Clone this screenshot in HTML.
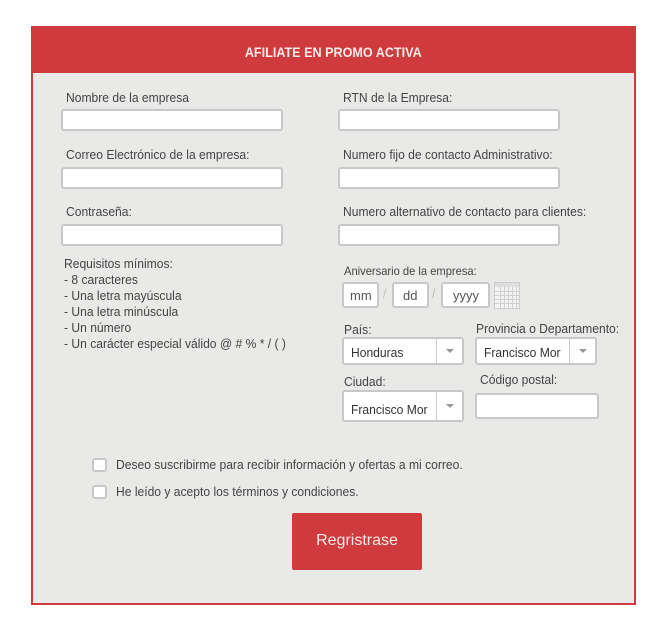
<!DOCTYPE html>
<html><head><meta charset="utf-8"><style>
*{box-sizing:border-box;margin:0;padding:0}
body{width:659px;height:624px;background:#fff;position:relative;font-family:"Liberation Sans",sans-serif;color:#444;font-size:13px}
.a{position:absolute}
#box{left:31px;top:26px;width:605px;height:579px;border:2px solid #cf3b3c;border-top:none;background:#e9e9e8}
#hd{left:31px;top:26px;width:605px;height:47px;background:#cf3b3c;color:#fbeaea;font-size:14px;font-weight:bold;text-align:center;line-height:52px}
#hd span{display:inline-block;transform:scaleX(0.9)}
.in{position:absolute;background:#fff;border:2px solid #c8c8c8;border-radius:3px;height:22px}
.l{position:absolute;white-space:nowrap;font-size:13px;color:#444;transform:scaleX(0.93);transform-origin:0 0}
.sel{position:absolute;background:#fff;border:2px solid #c8c8c8;border-radius:3px}
.sel span{position:absolute;left:7px;bottom:3px;font-size:13px;color:#333;white-space:nowrap;transform:scaleX(0.93);transform-origin:0 0}
.sel i{position:absolute;right:0;top:0;bottom:0;width:26px;border-left:1px solid #ccc;background:#fff}
.sel i:after{content:"";position:absolute;left:9px;top:50%;margin-top:-2px;border-left:4px solid transparent;border-right:4px solid transparent;border-top:4px solid #999}
.cb{position:absolute;width:15px;height:14px;border:2px solid #c8c8c8;border-radius:3px;background:#fff}
</style></head><body>
<div id="box" class="a"></div>
<div id="hd" class="a"><span>AFILIATE EN PROMO ACTIVA</span></div>

<div class="l" style="left:66px;top:90px">Nombre de la empresa</div>
<div class="in" style="left:61px;top:109px;width:222px"></div>
<div class="l" style="left:66px;top:147px">Correo Electrónico de la empresa:</div>
<div class="in" style="left:61px;top:167px;width:222px"></div>
<div class="l" style="left:66px;top:204px">Contraseña:</div>
<div class="in" style="left:61px;top:224px;width:222px"></div>

<div class="l" style="left:343px;top:90px">RTN de la Empresa:</div>
<div class="in" style="left:338px;top:109px;width:222px"></div>
<div class="l" style="left:343px;top:147px">Numero fijo de contacto Administrativo:</div>
<div class="in" style="left:338px;top:167px;width:222px"></div>
<div class="l" style="left:343px;top:204px">Numero alternativo de contacto para clientes:</div>
<div class="in" style="left:338px;top:224px;width:222px"></div>

<div class="l" style="left:64px;top:256px;line-height:16px">Requisitos mínimos:<br>- 8 caracteres<br>- Una letra mayúscula<br>- Una letra minúscula<br>- Un número<br>- Un carácter especial válido @ # % * / ( )</div>

<div class="l" style="left:344px;top:264px;font-size:12px">Aniversario de la empresa:</div>
<div class="in" style="left:342px;top:282px;width:37px;height:26px;font-size:13px;color:#555;padding:4px 0 0 6px">mm</div>
<div class="l" style="left:383px;top:286px;color:#bbb">/</div>
<div class="in" style="left:392px;top:282px;width:37px;height:26px;font-size:13px;color:#555;padding:4px 0 0 9px">dd</div>
<div class="l" style="left:432px;top:286px;color:#bbb">/</div>
<div class="in" style="left:441px;top:282px;width:49px;height:26px;font-size:13px;color:#555;padding:4px 0 0 10px">yyyy</div>
<svg class="a" style="left:494px;top:282px" width="26" height="27" viewBox="0 0 26 27"><rect x="0.5" y="0.5" width="25" height="26" fill="#f3f3f3" stroke="#ccc"/><rect x="1" y="1" width="24" height="4" fill="#ddd"/><g stroke="#d0d0d0" stroke-width="1"><line x1="1" y1="9.5" x2="25" y2="9.5"/><line x1="1" y1="13.5" x2="25" y2="13.5"/><line x1="1" y1="17.5" x2="25" y2="17.5"/><line x1="1" y1="21.5" x2="25" y2="21.5"/><line x1="6.5" y1="5" x2="6.5" y2="26"/><line x1="10.5" y1="5" x2="10.5" y2="26"/><line x1="14.5" y1="5" x2="14.5" y2="26"/><line x1="18.5" y1="5" x2="18.5" y2="26"/><line x1="22.5" y1="5" x2="22.5" y2="26"/></g></svg>

<div class="l" style="left:344px;top:322px">País:</div>
<div class="sel" style="left:342px;top:337px;width:122px;height:28px"><span>Honduras</span><i></i></div>
<div class="l" style="left:476px;top:321px">Provincia o Departamento:</div>
<div class="sel" style="left:475px;top:337px;width:122px;height:28px"><span>Francisco Mor</span><i></i></div>
<div class="l" style="left:344px;top:374px">Ciudad:</div>
<div class="sel" style="left:342px;top:390px;width:122px;height:32px"><span>Francisco Mor</span><i></i></div>
<div class="l" style="left:480px;top:372px">Código postal:</div>
<div class="in" style="left:475px;top:393px;width:124px;height:26px"></div>

<div class="cb" style="left:92px;top:458px"></div>
<div class="l" style="left:116px;top:457px">Deseo suscribirme para recibir información y ofertas a mi correo.</div>
<div class="cb" style="left:92px;top:485px"></div>
<div class="l" style="left:116px;top:484px">He leído y acepto los términos y condiciones.</div>

<div class="a" style="left:292px;top:513px;width:130px;height:57px;background:#cf3b3c;border-radius:2px;color:#fbeaea;font-size:16px;text-align:center;line-height:56px">Regristrase</div>
</body></html>
